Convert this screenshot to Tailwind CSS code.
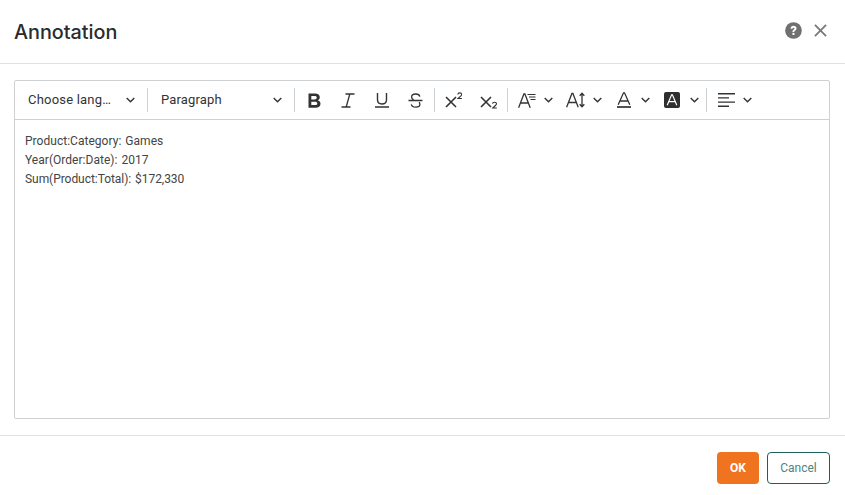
<!DOCTYPE html>
<html><head><meta charset="utf-8">
<script src="https://cdn.jsdelivr.net/npm/@tailwindcss/browser@4"></script>
</head>
<body class="bg-white">
<div class="w-[845px] h-[495px] flex flex-col bg-white font-['Roboto',sans-serif] text-[#333] overflow-hidden">
  <header class="h-[64px] shrink-0 flex items-center justify-between pl-[14px] pr-[18px] border-b border-[#e2e2e2]">
    <h1 class="font-['Inter',sans-serif] text-[19.8px] font-medium text-[#2b2b2b] leading-[20px]">Annotation</h1>
    <div class="flex items-center gap-[12px] -mt-[3px]">
      <svg class="w-[17px] h-[17px]" viewBox="0 0 18 18"><circle cx="9" cy="9" r="8.8" fill="#707070"/><path d="M5.900 7.100c0-1.900 1.300-3.100 3.200-3.100 1.800 0 3.100 1.100 3.100 2.700 0 1.300-.7 1.900-1.600 2.500-.6.400-.8.700-.8 1.300H7.900c0-1.200.3-1.800 1.200-2.400.6-.4 1-.7 1-1.200s-.4-.9-1-.9c-.7 0-1.100.4-1.100 1.100z" fill="#fff"/><rect x="7.900" y="11.500" width="2.100" height="2.200" fill="#fff"/></svg>
      <svg class="w-[13px] h-[13px]" viewBox="0 0 14 14"><path d="M1 1l12 12M13 1L1 13" stroke="#7a7a7a" stroke-width="2" fill="none"/></svg>
    </div>
  </header>
  <main class="h-[371px] shrink-0 pt-[16px] pb-[16px] px-[14px]">
    <div class="w-[816px] h-[339px] border border-[#cfd2d4] rounded-[2px] flex flex-col">
      <div class="h-[39px] shrink-0 border-b border-[#cfd2d4] flex items-center text-[#333]">
        <div class="w-[132px] shrink-0 h-[26px] flex items-center justify-between pl-[13px] pr-[12px] text-[13px] tracking-[0.2px]">
          <span>Choose lang…</span>
          <svg class="w-[9px] h-[6px]" viewBox="0 0 9 6"><path d="M.7 .9l3.800 3.800L8.300 .9" stroke="#333" stroke-width="1.400" fill="none"/></svg>
        </div>
        <div class="w-px h-[24px] bg-[#cfd2d4] shrink-0"></div>
        <div class="w-[146px] shrink-0 h-[26px] flex items-center justify-between pl-[13px] pr-[12px] text-[13px] tracking-[0.15px]">
          <span>Paragraph</span>
          <svg class="w-[9px] h-[6px]" viewBox="0 0 9 6"><path d="M.7 .9l3.800 3.800L8.300 .9" stroke="#333" stroke-width="1.400" fill="none"/></svg>
        </div>
        <div class="w-px h-[24px] bg-[#cfd2d4] shrink-0"></div>
        <div class="w-[139px] shrink-0 flex items-center">
          <div class="w-[34px] h-[24px] flex items-center justify-center ml-[2px]">
            <svg class="w-[13px] h-[15px]" viewBox="0 0 13 15"><path fill-rule="evenodd" d="M.5 .5h6.600c3 0 4.700 1.400 4.700 3.700 0 1.500-.8 2.600-2.100 3 1.700.4 2.800 1.700 2.800 3.500 0 2.500-1.900 4.100-5 4.100h-7zM3.300 2.900v3.500h3.300c1.400 0 2.200-.6 2.200-1.800S8 2.900 6.600 2.900zm0 5.800v3.400h3.700c1.500 0 2.300-.6 2.300-1.700s-.8-1.700-2.400-1.700z" fill="#333"/></svg>
          </div>
          <div class="w-[34px] h-[24px] flex items-center justify-center">
            <svg class="w-[14px] h-[15px]" viewBox="0 0 14 15"><path d="M4.500 1h9M.5 14h9M8.800 1L5.200 14" stroke="#333" stroke-width="1.300" fill="none"/></svg>
          </div>
          <div class="w-[34px] h-[24px] flex items-center justify-center">
            <svg class="w-[14px] h-[16px]" viewBox="0 0 14 16"><path d="M2.500 1v6.800c0 2.800 1.700 4.200 4.500 4.200s4.500-1.400 4.500-4.200V1M0 15h14" stroke="#333" stroke-width="1.400" fill="none"/></svg>
          </div>
          <div class="w-[32px] h-[24px] flex items-center justify-center">
            <svg class="w-[15px] h-[15px]" viewBox="0 0 15 15"><path d="M11.800 3.600C11.500 2 10 1 7.700 1 5.300 1 3.600 2 3.600 3.900c0 1.200.7 2.100 2 2.700M.5 7.500h14M11 9.300c.6.500.9 1.100.9 1.900 0 1.900-1.700 2.900-4.100 2.900-2.500 0-4.100-1-4.500-2.800" stroke="#333" stroke-width="1.300" fill="none"/></svg>
          </div>
        </div>
        <div class="w-px h-[24px] bg-[#cfd2d4] shrink-0"></div>
        <div class="w-[72px] shrink-0 flex items-center">
          <div class="w-[38px] h-[24px] flex items-center justify-center ml-[1px]">
            <svg class="w-[20px] h-[18px]" viewBox="0 0 20 18"><path d="M1 6l10 10M11 6L1 16" stroke="#333" stroke-width="1.600" fill="none"/><path d="M12.800 3.500c.1-1 .8-1.600 1.900-1.600s1.900.6 1.900 1.600c0 .8-.5 1.200-1 1.700l-2.600 2.300h3.900" stroke="#333" stroke-width="1.100" fill="none"/></svg>
          </div>
          <div class="w-[31px] h-[24px] flex items-center justify-center">
            <svg class="w-[20px] h-[18px]" viewBox="0 0 20 18"><path d="M1 6l10 10M11 6L1 16" stroke="#333" stroke-width="1.600" fill="none"/><path d="M12.500 12.800c.1-1 .9-1.600 2-1.600s2 .6 2 1.600c0 .8-.5 1.200-1.100 1.700l-2.600 2.500h4" stroke="#333" stroke-width="1.100" fill="none"/></svg>
          </div>
        </div>
        <div class="w-px h-[24px] bg-[#cfd2d4] shrink-0"></div>
        <div class="w-[198px] shrink-0 flex items-center">
          <div class="w-[48px] h-[24px] flex items-center pl-[10px] gap-[8px]">
            <svg class="w-[18px] h-[15px] shrink-0" viewBox="0 0 18 15"><path d="M.6 14.700L5.900 1h1l5.300 13.700M2.500 10h8" stroke="#333" stroke-width="1.300" fill="none"/><path d="M9.500 1.500h8M11 4h6.500M12.500 6.500h5" stroke="#333" stroke-width="1" fill="none"/></svg>
            <svg class="w-[9px] h-[6px] shrink-0" viewBox="0 0 9 6"><path d="M.7 .9l3.800 3.800L8.300 .9" stroke="#333" stroke-width="1.400" fill="none"/></svg>
          </div>
          <div class="w-[50px] h-[24px] flex items-center pl-[10px] gap-[8px]">
            <svg class="w-[19px] h-[16px] shrink-0" viewBox="0 0 19 16"><path d="M.6 15.300L5.900 1.500h1l5.300 13.800M2.500 10.500h8" stroke="#333" stroke-width="1.300" fill="none"/><path d="M16 2v12M13.700 3.800L16 1.300l2.300 2.500M13.700 12.200l2.300 2.500 2.300-2.500" stroke="#333" stroke-width="1.300" fill="none"/></svg>
            <svg class="w-[9px] h-[6px] shrink-0" viewBox="0 0 9 6"><path d="M.7 .9l3.800 3.800L8.300 .9" stroke="#333" stroke-width="1.400" fill="none"/></svg>
          </div>
          <div class="w-[48px] h-[24px] flex items-center pl-[11px] gap-[10px]">
            <svg class="w-[14px] h-[16px] shrink-0" viewBox="0 0 14 16"><path d="M1.200 12.800L6.500 .8h1l5.300 12M3.200 9h7.600" stroke="#333" stroke-width="1.300" fill="none"/><path d="M0 15h14" stroke="#333" stroke-width="1.700" fill="none"/></svg>
            <svg class="w-[9px] h-[6px] shrink-0" viewBox="0 0 9 6"><path d="M.7 .9l3.800 3.800L8.300 .9" stroke="#333" stroke-width="1.400" fill="none"/></svg>
          </div>
          <div class="w-[52px] h-[24px] flex items-center pl-[10px] gap-[10px]">
            <svg class="w-[16px] h-[16px] shrink-0" viewBox="0 0 16 16"><rect width="16" height="16" rx="2" fill="#2f2f2f"/><path d="M3.200 13.300L7.600 2.800h.8l4.400 10.500M5 9.700h6" stroke="#fff" stroke-width="1.200" fill="none"/></svg>
            <svg class="w-[9px] h-[6px] shrink-0" viewBox="0 0 9 6"><path d="M.7 .9l3.800 3.800L8.300 .9" stroke="#333" stroke-width="1.400" fill="none"/></svg>
          </div>
        </div>
        <div class="w-px h-[24px] bg-[#cfd2d4] shrink-0"></div>
        <div class="h-[24px] flex items-center pl-[11px] gap-[8px]">
          <svg class="w-[17px] h-[14px] shrink-0" viewBox="0 0 17 14"><path d="M0 .8h17M0 4.900h11M0 9.100h17M0 13.200h11" stroke="#333" stroke-width="1.400" fill="none"/></svg>
          <svg class="w-[9px] h-[6px] shrink-0" viewBox="0 0 9 6"><path d="M.7 .9l3.800 3.800L8.300 .9" stroke="#333" stroke-width="1.400" fill="none"/></svg>
        </div>
      </div>
      <div class="pt-[12px] pl-[10px] text-[12px] leading-[19px] text-[#444] tracking-[0.03px] [word-spacing:1px]">
        <p>Product:Category: Games</p>
        <p>Year(Order:Date): 2017</p>
        <p class="tracking-[-0.05px]">Sum(Product:Total): $172,330</p>
      </div>
    </div>
  </main>
  <footer class="flex-1 border-t border-[#e2e2e2] flex justify-end items-start pt-[16px] pr-[15px] gap-[8px]">
    <button class="w-[42px] h-[32px] rounded-[4px] bg-[#f0731f] text-white text-[12px] font-bold flex items-center justify-center">OK</button>
    <button class="w-[63px] h-[32px] rounded-[4px] border border-[#1f5f5b] bg-white text-[#4d8480] text-[12px] flex items-center justify-center">Cancel</button>
  </footer>
</div>
</body></html>
